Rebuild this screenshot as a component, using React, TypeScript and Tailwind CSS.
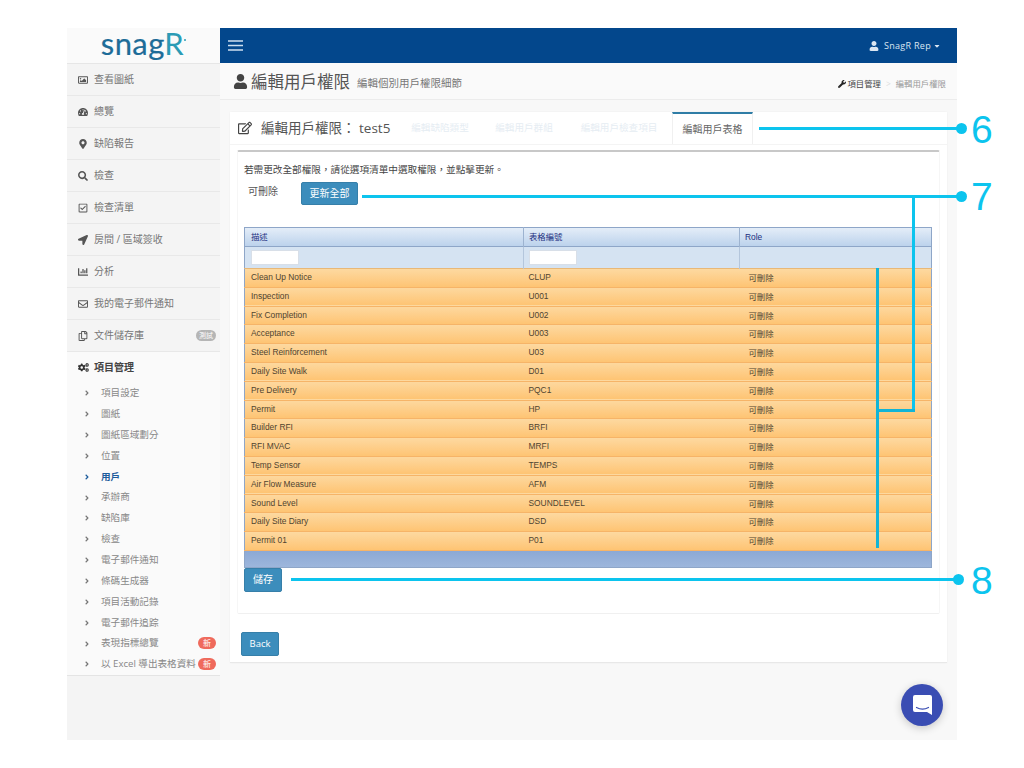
import {
  FaAngleRight,
  FaCaretDown,
  FaChartBar,
  FaCogs,
  FaLocationArrow,
  FaMapMarkerAlt,
  FaRegCheckSquare,
  FaRegCopy,
  FaRegEdit,
  FaRegEnvelope,
  FaRegImage,
  FaSearch,
  FaTachometerAlt,
  FaUser,
  FaWrench,
} from "react-icons/fa";

const font = { fontFamily: '"Open Sans", "Noto Sans CJK TC", sans-serif' };

const mainMenu = [
  { label: "查看圖紙", icon: FaRegImage },
  { label: "總覽", icon: FaTachometerAlt },
  { label: "缺陷報告", icon: FaMapMarkerAlt },
  { label: "檢查", icon: FaSearch },
  { label: "檢查清單", icon: FaRegCheckSquare },
  { label: "房間 / 區域簽收", icon: FaLocationArrow },
  { label: "分析", icon: FaChartBar },
  { label: "我的電子郵件通知", icon: FaRegEnvelope },
  { label: "文件儲存庫", icon: FaRegCopy, beta: true },
];

const subMenu = [
  { label: "項目設定" },
  { label: "圖紙" },
  { label: "圖紙區域劃分" },
  { label: "位置" },
  { label: "用戶", active: true },
  { label: "承辦商" },
  { label: "缺陷庫" },
  { label: "檢查" },
  { label: "電子郵件通知" },
  { label: "條碼生成器" },
  { label: "項目活動記錄" },
  { label: "電子郵件追踪" },
  { label: "表現指標總覽", isNew: true },
  { label: "以 Excel 導出表格資料", isNew: true },
];

const rows = [
  ["Clean Up Notice", "CLUP"],
  ["Inspection", "U001"],
  ["Fix Completion", "U002"],
  ["Acceptance", "U003"],
  ["Steel Reinforcement", "U03"],
  ["Daily Site Walk", "D01"],
  ["Pre Delivery", "PQC1"],
  ["Permit", "HP"],
  ["Builder RFI", "BRFI"],
  ["RFI MVAC", "MRFI"],
  ["Temp Sensor", "TEMPS"],
  ["Air Flow Measure", "AFM"],
  ["Sound Level", "SOUNDLEVEL"],
  ["Daily Site Diary", "DSD"],
  ["Permit 01", "P01"],
];

function Sidebar() {
  return (
    <aside className="w-[153px] shrink-0 bg-[#f4f4f4] flex flex-col">
      <div className="h-[36px] bg-[#fafafa] border-b border-[#e6e6e6] flex items-center justify-center">
        <span className="text-[31px] leading-none tracking-[0.4px] text-[#1d6c98] pb-[5px] [-webkit-text-stroke:0.2px_#1d6c98]" style={{ fontFamily: "Lato, sans-serif" }}>
          snag
          <span className="text-[#2b9bb5] [-webkit-text-stroke:0px_#2b9bb5]">R</span>
          <span className="inline-block w-[2px] h-[2px] rounded-full bg-[#2b9bb5] align-[14px]" />
        </span>
      </div>
      {mainMenu.map((item) => (
        <div key={item.label} className="h-[32px] flex items-center pl-[11px] pr-[4px] border-b border-[#e8e8e8] text-[10px] text-[#777]">
          <span className="w-[10px] flex justify-center shrink-0">
            <item.icon className="w-[10px] h-[10px] text-[#555]" />
          </span>
          <span className="ml-[6px]">{item.label}</span>
          {item.beta && (
            <span className="ml-auto rounded-full bg-[#b5b5b5] text-white text-[7px] leading-[11px] px-[3px]">測試</span>
          )}
        </div>
      ))}
      <div className="bg-[#fafafa] border-b border-[#e4e4e4]">
        <div className="h-[31px] flex items-center pl-[11px] text-[10px] font-semibold text-[#444]">
          <FaCogs className="w-[11px] h-[11px] text-[#333] shrink-0" />
          <span className="ml-[5px]">項目管理</span>
        </div>
        {subMenu.map((item) => (
          <div
            key={item.label}
            className={`h-[20.85px] flex items-center pl-[16px] pr-[4px] text-[9.6px] ${item.active ? "text-[#1d5c9c] font-bold" : "text-[#888]"}`}
          >
            <FaAngleRight className={`w-[8px] h-[8px] shrink-0 ${item.active ? "text-[#1d5c9c]" : "text-[#777]"}`} />
            <span className="ml-[10px] whitespace-nowrap">{item.label}</span>
            {item.isNew && (
              <span className="ml-auto w-[18px] text-center rounded-full bg-[#ef6a5c] text-white text-[8px] leading-[12px] -mt-[1px] shrink-0">新</span>
            )}
          </div>
        ))}
      </div>
    </aside>
  );
}

function PermissionTable() {
  return (
    <table className="w-[688px] table-fixed border-collapse text-[8.4px] border border-[#8ea6c8]" style={{ fontFamily: '"Liberation Sans", "Noto Sans CJK TC", sans-serif' }}>
      <colgroup>
        <col className="w-[279px]" />
        <col className="w-[216px]" />
        <col />
      </colgroup>
      <thead>
        <tr className="h-[19px] bg-gradient-to-b from-[#e4edf8] to-[#bcd2ec] text-[#1c2f80] border-b border-[#8ea6c8]">
          <th className="font-normal text-left pl-[6px] border-r border-[#9db3d0]">描述</th>
          <th className="font-normal text-left pl-[5px] border-r border-[#9db3d0]">表格編號</th>
          <th className="font-normal text-left pl-[5px]">Role</th>
        </tr>
        <tr className="h-[22px] bg-[#d5e3f2] border-b border-[#e8b878]">
          <td className="pl-[6px] border-r border-[#b4c6dc]">
            <div className="w-[48px] h-[15px] bg-white border border-[#d8dfe8]" />
          </td>
          <td className="pl-[5px] border-r border-[#b4c6dc]">
            <div className="w-[48px] h-[15px] bg-white border border-[#d8dfe8]" />
          </td>
          <td />
        </tr>
      </thead>
      <tbody>
        {rows.map(([name, code]) => (
          <tr key={code} className="h-[18.8px] bg-gradient-to-b from-[#fdd9a0] to-[#fec473] border-b border-[#f6b468] text-[#4f4430]">
            <td className="pl-[6px] pb-[1px]">{name}</td>
            <td className="pl-[5px] pb-[1px]">{code}</td>
            <td className="pl-[9px] pt-[1px]">可刪除</td>
          </tr>
        ))}
        <tr className="h-[17px] bg-gradient-to-b from-[#8ba8d4] to-[#9db6dc]">
          <td colSpan={3} />
        </tr>
      </tbody>
    </table>
  );
}

function Annotations() {
  const cyan = "bg-[#0cc4ee]";
  return (
    <>
      <div className={`absolute left-[759px] top-[127px] w-[200px] h-[3px] ${cyan}`} />
      <div className={`absolute left-[956px] top-[123px] w-[11px] h-[11px] rounded-full ${cyan}`} />
      <span className="absolute left-[971px] top-[108px] text-[39px] leading-[44px] text-[#0cc4ee]" style={{ fontFamily: '"Liberation Sans", sans-serif' }}>6</span>

      <div className={`absolute left-[362px] top-[195px] w-[597px] h-[3px] ${cyan}`} />
      <div className={`absolute left-[956px] top-[191px] w-[11px] h-[11px] rounded-full ${cyan}`} />
      <span className="absolute left-[971px] top-[175px] text-[39px] leading-[44px] text-[#0cc4ee]" style={{ fontFamily: '"Liberation Sans", sans-serif' }}>7</span>
      <div className={`absolute left-[912px] top-[196px] w-[3px] h-[216px] ${cyan}`} />
      <div className="absolute left-[877px] top-[409px] w-[38px] h-[3px] bg-[#12b4d6]" />
      <div className="absolute left-[876px] top-[268px] w-[3px] h-[280px] bg-[#12b4d6]" />

      <div className={`absolute left-[291px] top-[578px] w-[665px] h-[3px] ${cyan}`} />
      <div className={`absolute left-[953px] top-[574px] w-[11px] h-[11px] rounded-full ${cyan}`} />
      <span className="absolute left-[971px] top-[559px] text-[39px] leading-[44px] text-[#0cc4ee]" style={{ fontFamily: '"Liberation Sans", sans-serif' }}>8</span>
    </>
  );
}

export default function App() {
  return (
    <div className="relative w-[1024px] h-[768px] bg-white pt-[28px] pl-[67px] overflow-hidden" style={font}>
      <div className="w-[890px] h-[712px] flex bg-[#f8f8f8]">
        <Sidebar />
        <div className="flex-1 flex flex-col min-w-0">
          <header className="h-[35px] shrink-0 bg-[#03478c] flex items-center justify-between pl-[8px] pr-[16px] text-white">
            <svg width="15" height="11" viewBox="0 0 15 11" className="text-[#cfe0f0]">
              <path d="M0 1h15M0 5.5h15M0 10h15" stroke="currentColor" strokeWidth="1.4" fill="none" />
            </svg>
            <div className="flex items-center text-[9px] text-[#dbe6f2] tracking-[0.3px]">
              <FaUser className="w-[10px] h-[10px] mr-[5px]" />
              SnagR Rep
              <FaCaretDown className="w-[8px] h-[8px] ml-[2px]" />
            </div>
          </header>

          <div className="h-[37px] shrink-0 bg-[#fafafa] border-b border-[#ececec] flex items-center pl-[13px] pr-[11px]">
            <FaUser className="w-[15px] h-[15px] text-[#444] mt-[1px]" />
            <h1 className="ml-[3px] mt-[3px] text-[16.5px] text-[#555]">編輯用戶權限</h1>
            <span className="ml-[7px] mt-[6px] text-[10.5px] text-[#777]">編輯個別用戶權限細節</span>
            <div className="ml-auto mt-[6px] flex items-center text-[8.4px]">
              <FaWrench className="w-[8px] h-[8px] text-[#222] mr-[1px]" />
              <span className="text-[#444]">項目管理</span>
              <span className="mx-[5px] text-[#ddd]">&gt;</span>
              <span className="text-[#999]">編輯用戶權限</span>
            </div>
          </div>

          <main className="mt-[12px] ml-[10px] w-[717px] h-[551px] bg-white border-b border-[#e8e8e8] pt-0 px-[7px] flex flex-col shadow-[0_0_2px_rgba(0,0,0,0.05)]">
            <div className="-mx-[7px] h-[33px] shrink-0 flex items-stretch border-b border-[#f4f4f4] pl-[7px]">
              <div className="flex items-center w-[161px] shrink-0">
                <FaRegEdit className="w-[14px] h-[14px] text-[#444] ml-[1px]" />
                <span className="ml-[9px] text-[13.5px] text-[#555] whitespace-nowrap">編輯用戶權限： test5</span>
              </div>
              <div className="flex items-center text-[9.6px] text-[#e6edf3] whitespace-nowrap">
                <span className="w-[84px] text-center">編輯缺陷類型</span>
                <span className="w-[84px] text-center">編輯用戶群組</span>
                <span className="w-[106px] text-center">編輯用戶檢查項目</span>
              </div>
              <div className="w-[81px] border-t-2 border-t-[#2f7da6] border-x border-x-[#f0f0f0] flex items-center justify-center text-[10px] text-[#666]">
                編輯用戶表格
              </div>
            </div>

            <div className="mt-[5px] h-[464px] border-t-2 border-[#c8c8c8] border-b border-x border-x-[#f6f6f6] border-b-[#f0f0f0] rounded-[2px] shrink-0 flex flex-col pl-[6px]">
              <p className="mt-[11px] text-[9.65px] leading-[14px] text-[#444]">若需更改全部權限，請從選項清單中選取權限，並點擊更新。</p>
              <div className="mt-[5px] flex items-start">
                <span className="ml-[4px] w-[53px] text-[10px] leading-[14px] mt-[2px] text-[#555]">可刪除</span>
                <button className="w-[57px] h-[23px] rounded-[2px] bg-[#3c8dbc] border border-[#367fa9] text-[10px] text-white">更新全部</button>
              </div>
              <div className="mt-[22px]">
                <PermissionTable />
              </div>
              <button className="w-[38px] h-[24px] rounded-[2px] bg-[#3c8dbc] border border-[#367fa9] text-[10px] text-white">儲存</button>
            </div>

            <button className="mt-[18px] ml-[4px] w-[38px] h-[24px] rounded-[2px] bg-[#3c8dbc] border border-[#367fa9] text-[9.5px] text-white">Back</button>
          </main>
        </div>
      </div>

      <button className="absolute left-[901px] top-[684px] w-[42px] h-[42px] rounded-full bg-[#3a4db3] flex items-center justify-center shadow-[0_2px_8px_rgba(0,0,0,0.2)]">
        <svg width="21" height="22" viewBox="0 0 21 22">
          <path d="M3 1h15a2 2 0 0 1 2 2v18l-5-3H3a2 2 0 0 1-2-2V3a2 2 0 0 1 2-2z" fill="#fff" />
          <path d="M4.5 13.5c3.5 2 8.5 2 12 0" fill="none" stroke="#3a4db3" strokeWidth="1.2" strokeLinecap="round" />
        </svg>
      </button>

      <Annotations />
    </div>
  );
}
